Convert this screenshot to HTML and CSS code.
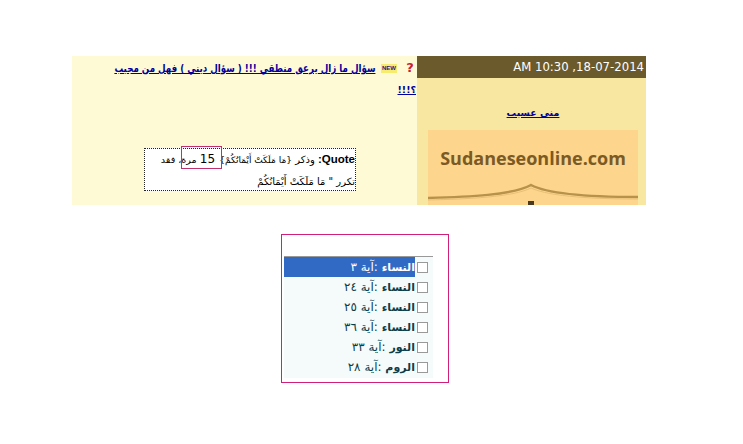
FILE: index.html
```html
<!DOCTYPE html>
<html lang="ar">
<head>
<meta charset="utf-8">
<title>Sudaneseonline</title>
<link rel="stylesheet" href="styles.css">
</head>
<body>
<div class="post">
  <section class="main" dir="rtl">
    <div class="title">
      <div class="title-line">
        <span class="q-icon">?</span>
        <span class="new-icon" dir="ltr">NEW</span>
        <a href="#" class="title-link">سؤال ما زال يرعق منطقي !!! ( سؤال ديني ) فهل من مجيب</a>
      </div>
      <a href="#" class="title-link title-more">؟!!!</a>
    </div>
    <div class="quote">
      <span class="mark"></span>
      <b class="quote-label">Quote:</b> وذكر <span class="phrase">{مَا مَلَكَتْ أَيْمَانُكُمْ}</span> <span class="count">15</span> <span class="tail">مرة، فقد</span><br>تكرر " مَا مَلَكَتْ أَيْمَانُكُمْ
    </div>
  </section>
  <aside class="side">
    <div class="date" dir="ltr">AM 10:30 ,18-07-2014</div>
    <div class="author"><a href="#" dir="rtl">منى عسيب</a></div>
    <div class="logo">
      <span class="logo-text">Sudaneseonline.com</span>
      <svg class="roof" viewBox="0 0 210 22" width="210" height="22" aria-hidden="true">
        <path d="M0 15 C40 14 85 12 103 2 C122 12 170 14 210 14" fill="none" stroke="#b8924a" stroke-width="2.5"/>
        <path d="M0 17 C40 16 85 14 103 5 C122 14 170 16 210 16" fill="none" stroke="#e8c078" stroke-width="1"/>
        <rect x="100" y="18" width="6" height="4" fill="#4a3a20"/>
      </svg>
    </div>
  </aside>
</div>

<div class="results">
  <ul class="list" dir="rtl">
    <li class="row selected"><span class="check"></span><span class="label"><b>النساء</b> :آية ٣</span></li>
    <li class="row"><span class="check"></span><span class="label"><b>النساء</b> :آية ٢٤</span></li>
    <li class="row"><span class="check"></span><span class="label"><b>النساء</b> :آية ٢٥</span></li>
    <li class="row"><span class="check"></span><span class="label"><b>النساء</b> :آية ٣٦</span></li>
    <li class="row"><span class="check"></span><span class="label"><b>النور</b> :آية ٣٣</span></li>
    <li class="row"><span class="check"></span><span class="label"><b>الروم</b> :آية ٢٨</span></li>
  </ul>
</div>
</body>
</html>
```

FILE: styles.css
```css
html, body {
  margin: 0;
  padding: 0;
  background: #fff;
  font-family: "DejaVu Sans", sans-serif;
  color: #000;
}
body {
  padding-top: 56px;
  height: 388px;
  overflow: hidden;
}
.post {
  display: flex;
  flex-direction: row;
  width: 574px;
  height: 149px;
  margin-left: 72px;
}
.main {
  width: 345px;
  background: #fefad6;
  box-sizing: border-box;
  padding: 2px 0 0 0;
}
.title {
  font-size: 11px;
  line-height: 21px;
  padding: 0 1px 0 0;
  height: 90px;
  white-space: nowrap;
}
.title-line {
  display: flex;
  align-items: flex-start;
}
.title-link {
  display: block;
  flex: none;
  color: #00009c;
  font-weight: bold;
  text-decoration: underline;
  transform: scaleX(0.79);
  transform-origin: right top;
}
.title-more {
  width: 21px;
  transform: none;
  font-size: 9.5px;
}
.q-icon {
  flex: none;
  width: 12px;
  color: #c8202c;
  font: bold 13px/16px "DejaVu Sans", sans-serif;
  text-align: center;
  margin: 2px 0 0 7px;
}
.new-icon {
  flex: none;
  width: 16px;
  height: 9px;
  background: #f8ec70;
  color: #202080;
  font: bold 6px/9px "Liberation Sans", sans-serif;
  text-align: center;
  margin: 6px 0 0 6px;
}
.quote {
  position: relative;
  width: 212px;
  height: 43px;
  box-sizing: border-box;
  margin-right: 61px;
  border: 1px dotted #222;
  background: #fff;
  font-size: 10px;
  line-height: 21px;
  white-space: nowrap;
}
.quote-label {
  font-family: "Liberation Sans", sans-serif;
  font-size: 11.5px;
}
.phrase {
  font-size: 9px;
}
.tail {
  font-size: 9.5px;
}
.count {
  font-size: 12px;
  padding-right: 1px;
}
.mark {
  position: absolute;
  left: 36px;
  top: -3px;
  width: 41px;
  height: 23px;
  border: 1px solid #c03070;
  box-sizing: border-box;
}
.side {
  width: 229px;
  background: #f7e7a0;
  overflow: hidden;
  display: flex;
  flex-direction: column;
}
.date {
  height: 22px;
  background: #6b5a2c;
  color: #fff;
  font-size: 11.7px;
  line-height: 22px;
  text-align: right;
  padding-right: 2px;
  flex: none;
}
.author {
  text-align: center;
  font-size: 9.5px;
  line-height: 16px;
  margin-top: 27px;
  padding-left: 3px;
  flex: none;
}
.author a {
  color: #00009c;
  font-weight: bold;
}
.logo {
  margin: 9px 8px 0 11px;
  height: 75px;
  flex: none;
  background: #fdd58c;
  display: flex;
  flex-direction: column;
  align-items: center;
  overflow: hidden;
}
.logo-text {
  font-family: "Open Sans", sans-serif;
  font-weight: 700;
  font-size: 18px;
  line-height: 28px;
  margin-top: 14px;
  color: #7c5a24;
  white-space: nowrap;
}
.roof {
  display: block;
  margin-top: 11px;
  flex: none;
}
.results {
  box-sizing: border-box;
  width: 168px;
  height: 149px;
  margin: 29px 0 0 281px;
  border: 1px solid #d0207c;
  padding: 21px 15px 0 2px;
}
.list {
  list-style: none;
  margin: 0;
  padding: 0;
  background: #f5fbfb;
  border-top: 1px solid #999;
  height: 121px;
}
.row {
  display: flex;
  align-items: center;
  height: 20px;
  font-size: 12px;
  color: #0f3c46;
}
.row.selected .label {
  color: #fff;
}
.row.selected {
  background: linear-gradient(to left, transparent 18px, #316ac5 18px);
}
.check {
  flex: none;
  width: 11px;
  height: 11px;
  margin: 1px 5px 0 2px;
  background: #fff;
  border: 1px solid #999;
  box-sizing: border-box;
}
.label {
  margin-top: -1px;
}
.label b {
  font-size: 11px;
  font-weight: bold;
}
```
